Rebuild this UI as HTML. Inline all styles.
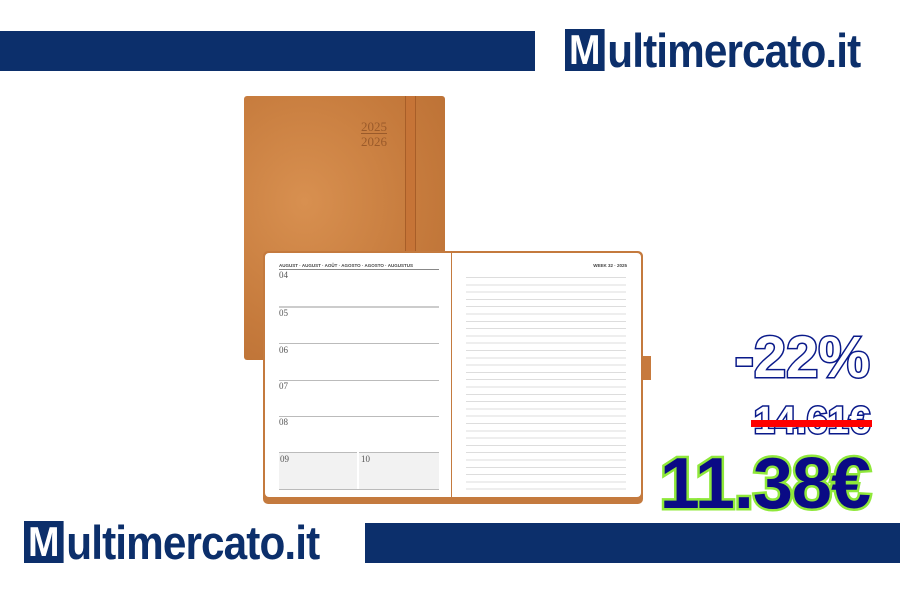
<!DOCTYPE html>
<html><head><meta charset="utf-8"><style>
*{margin:0;padding:0;box-sizing:border-box}
body{width:900px;height:600px;background:#fff;position:relative;overflow:hidden;font-family:"Liberation Sans",sans-serif}
.bar{position:absolute;background:#0c2f6b}
.logo{position:absolute;display:flex;align-items:center;color:#0c2f6b;font-weight:bold;letter-spacing:-1px;transform-origin:left center;transform:scaleX(0.9)}
.logo .m{background:#0c2f6b;color:#fff;display:inline-block;text-align:center;margin-right:3px;letter-spacing:0}
.abs{position:absolute}
.cover{left:244px;top:96px;width:201px;height:264px;border-radius:3px;background:radial-gradient(ellipse at 30% 40%,#d89050,#c57a3c 60%,#b96e33);}
.band{left:405px;top:96px;width:11px;height:264px;background:#c67437;border-left:1px solid #a85e28;border-right:1px solid #a85e28}
.book{left:263px;top:251px;width:380px;height:253px;background:#c47a3e;border-radius:5px}
.page{position:absolute;background:#fff;top:2px;height:244px}
.t{position:absolute;font-size:4px;color:#555}
.d{position:absolute;font-family:"Liberation Serif",serif;font-size:9px;color:#555}
.hl{position:absolute;left:14px;width:160px;height:1px;background:#bbb}
.rl{position:absolute;left:14px;width:160px;top:18px;height:222px;background:repeating-linear-gradient(#fff 0 6px,#ddd 6px 7px,#fff 7px 7.3px)}
.price{position:absolute;right:30px;font-weight:bold;text-align:right}
</style></head><body>
<div class="bar" style="left:0;top:31px;width:535px;height:40px"></div>
<div class="bar" style="left:365px;top:523px;width:535px;height:40px"></div>
<div class="logo" style="left:565px;top:28px;font-size:47px;height:44px"><span class="m" style="width:44px;height:42px;line-height:42px;font-size:42px">M</span>ultimercato.it</div>
<div class="logo" style="left:24px;top:520px;font-size:47px;height:44px"><span class="m" style="width:44px;height:42px;line-height:42px;font-size:42px">M</span>ultimercato.it</div>

<div class="abs cover"></div>
<div class="abs" style="left:361px;top:119px;font-family:'Liberation Serif',serif;font-size:13px;color:#9a5a2a;line-height:15px">2025<br><span style="border-top:1px solid #9a5a2a">2026</span></div>
<div class="abs band"></div>
<div class="abs" style="left:642px;top:356px;width:9px;height:24px;background:#c77a3d"></div>
<div class="abs book">
 <div class="page" style="left:2px;width:186px;border-radius:4px 0 0 4px">
  <div class="t" style="left:14px;top:10px;font-weight:bold;font-size:4.5px;color:#444">AUGUST · AUGUST · AOÛT · AGOSTO · AGOSTO · AUGUSTUS</div>
  <div class="hl" style="top:16px;background:#888"></div>
  <div class="d" style="left:14px;top:17px">04</div>
  <div class="hl" style="top:53px;height:2px;background:#ccc"></div><div class="d" style="left:14px;top:55px">05</div>
  <div class="hl" style="top:90px"></div><div class="d" style="left:14px;top:92px">06</div>
  <div class="hl" style="top:127px"></div><div class="d" style="left:14px;top:128px">07</div>
  <div class="hl" style="top:163px"></div><div class="d" style="left:14px;top:164px">08</div>
  <div style="position:absolute;left:14px;top:199px;width:78px;height:37px;background:#f2f2f2;border-top:1px solid #bbb"></div>
  <div style="position:absolute;left:94px;top:199px;width:80px;height:37px;background:#f2f2f2;border-top:1px solid #bbb"></div>
  <div class="d" style="left:15px;top:201px">09</div><div class="d" style="left:96px;top:201px">10</div>
  <div class="hl" style="top:236px"></div>
 </div>
 <div class="page" style="left:189px;width:189px;border-radius:0 4px 4px 0">
  <div class="t" style="right:14px;top:10px;font-weight:bold;font-size:4.5px;color:#444">WEEK 32 · 2025</div>
  <div class="rl"></div>
 </div>
</div>

<div class="price" style="top:324px;font-size:58px;color:#fff;-webkit-text-stroke:3px #0a1a8a;paint-order:stroke fill">-22%</div>
<div class="price" style="top:400px;font-size:38px;color:#fff;-webkit-text-stroke:3px #0a1a8a;paint-order:stroke fill">14.61€<div style="position:absolute;left:-3px;right:-2px;top:20px;height:7px;background:#f00"></div></div>
<div class="price" style="top:443px;font-size:72px;color:#0a0a85;-webkit-text-stroke:5px #8fe83a;paint-order:stroke fill;letter-spacing:-1px">11.38€</div>
</body></html>
